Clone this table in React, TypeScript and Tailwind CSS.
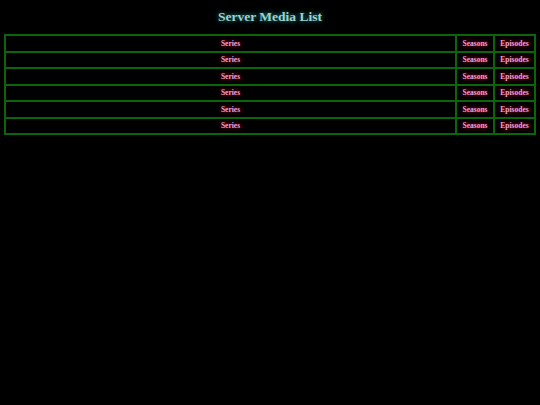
const rows = Array.from({ length: 6 }, (_, i) => ({
  id: i,
  series: "Series",
  seasons: "Seasons",
  episodes: "Episodes",
}));

export default function App() {
  return (
    <div className="min-h-[405px] w-[540px] bg-black font-['Liberation_Serif',serif] font-bold">
      {/* Title */}
      <h1 className="pt-[7px] pb-[8px] text-center text-[13.5px] leading-[19px] text-[#9fd2cf] [text-shadow:0_0_5px_#2a9c94]">
        Server Media List
      </h1>

      {/* Media table */}
      <div className="px-[4px]">
        <table className="w-full border-collapse border-2 border-[#0b650b]">
          <tbody>
            {rows.map(row => (
              <tr key={row.id} className="h-[16.5px]">
                <td className="border-2 border-[#0b650b] p-0 pt-px text-center text-[7.5px] leading-[12px] text-[#f0a0d4] [text-shadow:0_0_4px_#c8003c]">
                  {row.series}
                </td>
                <td className="w-[38px] border-2 border-[#0b650b] p-0 pt-px text-center text-[7.5px] leading-[12px] text-[#f0a0d4] [text-shadow:0_0_4px_#c8003c]">
                  {row.seasons}
                </td>
                <td className="w-[41px] border-2 border-[#0b650b] p-0 pt-px text-center text-[7.5px] leading-[12px] text-[#f0a0d4] [text-shadow:0_0_4px_#c8003c]">
                  {row.episodes}
                </td>
              </tr>
            ))}
          </tbody>
        </table>
      </div>
    </div>
  );
}
